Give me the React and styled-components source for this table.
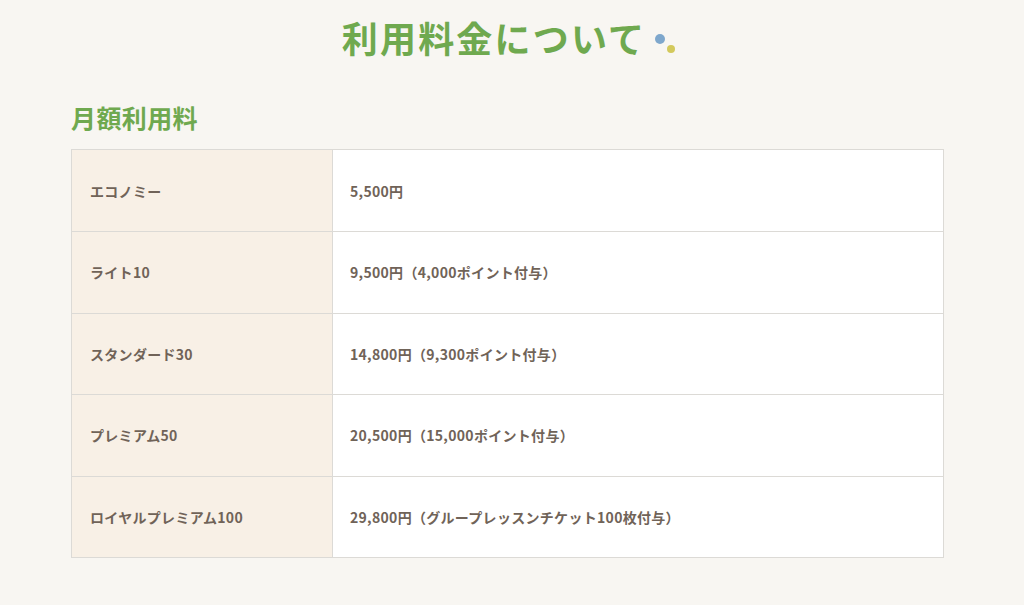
import React from "react";
import styled, { createGlobalStyle } from "styled-components";

const Global = createGlobalStyle`
  html, body { margin: 0; padding: 0; }
  body {
    background: #f8f6f2;
    font-family: "Noto Sans CJK JP", "Noto Sans", sans-serif;
  }
`;

const Page = styled.main`
  width: 1024px;
  height: 605px;
  box-sizing: border-box;
  padding: 12px 80px 0 71px;
  overflow: hidden;
`;

const Heading = styled.h1`
  margin: 0 0 38px;
  text-align: center;
  font-size: 36px;
  line-height: 1.4;
  font-weight: 700;
  letter-spacing: 2.2px;
  color: #6fa94f;
  padding-left: 2px;
`;

const Dots = styled.span`
  display: inline-block;
  position: relative;
  width: 22px;
  height: 30px;
  margin-left: 7px;
  vertical-align: middle;
`;

const Dot = styled.span`
  position: absolute;
  border-radius: 50%;
  left: ${(p) => p.$x}px;
  top: ${(p) => p.$y}px;
  width: ${(p) => p.$size}px;
  height: ${(p) => p.$size}px;
  background: ${(p) => p.$color};
`;

const SubHeading = styled.h2`
  margin: 0 0 14px;
  font-size: 25px;
  line-height: 1.4;
  font-weight: 700;
  color: #6fa94f;
  letter-spacing: 0.4px;
`;

const Table = styled.div`
  width: 873px;
  box-sizing: border-box;
  border: 1px solid #dcdad6;
  background: #fff;
`;

const Row = styled.div`
  display: grid;
  grid-template-columns: 261px 1fr;
  height: 80.6px;
  border-top: ${(p) => (p.$first ? "none" : "1px solid #dcdad6")};
`;

const Cell = styled.div`
  display: flex;
  align-items: center;
  padding: 0 0 0 ${(p) => (p.$head ? "18px" : "17px")};
  background: ${(p) => (p.$head ? "#f8f0e6" : "#ffffff")};
  border-right: ${(p) => (p.$head ? "1px solid #dcdad6" : "none")};
  font-size: 14px;
  font-weight: 700;
  color: #706358;
  letter-spacing: 0.3px;
`;

const rows = [
  ["エコノミー", "5,500円"],
  ["ライト10", "9,500円（4,000ポイント付与）"],
  ["スタンダード30", "14,800円（9,300ポイント付与）"],
  ["プレミアム50", "20,500円（15,000ポイント付与）"],
  ["ロイヤルプレミアム100", "29,800円（グループレッスンチケット100枚付与）"],
];

export default function App() {
  return (
    <>
      <Global />
      <Page>
        <Heading>
          利用料金について
          <Dots>
            <Dot $x={2} $y={6} $size={10} $color="#7ea7cc" />
            <Dot $x={14} $y={17} $size={8} $color="#d3c95c" />
          </Dots>
        </Heading>
        <SubHeading>月額利用料</SubHeading>
        <Table>
          {rows.map(([plan, price], i) => (
            <Row key={plan} $first={i === 0}>
              <Cell $head>{plan}</Cell>
              <Cell>{price}</Cell>
            </Row>
          ))}
        </Table>
      </Page>
    </>
  );
}
